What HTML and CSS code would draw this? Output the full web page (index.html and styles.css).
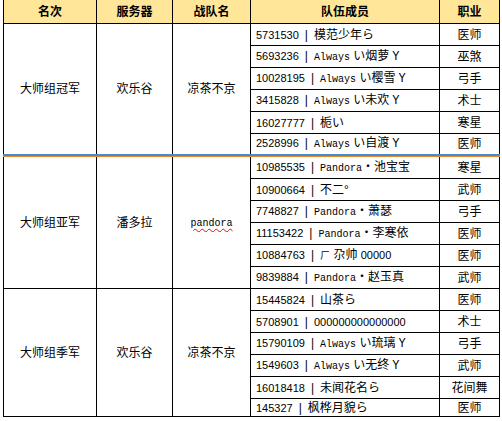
FILE: index.html
```html
<!DOCTYPE html>
<html lang="zh-CN">
<head>
<meta charset="utf-8">
<title>大师组排名</title>
<link rel="stylesheet" href="styles.css">
</head>
<body>
<table class="rank">
  <colgroup>
    <col class="c1"><col class="c2"><col class="c3"><col class="c4"><col class="c5">
  </colgroup>
  <thead>
    <tr><th>名次</th><th>服务器</th><th>战队名</th><th>队伍成员</th><th>职业</th></tr>
  </thead>
  <tbody>
    <tr>
      <td rowspan="6">大师组冠军</td><td rowspan="6">欢乐谷</td><td rowspan="6">凉茶不京</td>
      <td class="mem"><span class="num">5731530</span><span class="bar">|</span>模范少年ら</td><td>医师</td>
    </tr>
    <tr><td class="mem"><span class="num">5693236</span><span class="bar">|</span><span class="lat">Always</span> い烟萝<span class="lat tail">Y</span></td><td>巫煞</td></tr>
    <tr><td class="mem"><span class="num">10028195</span><span class="bar">|</span><span class="lat">Always</span> い樱雪<span class="lat tail">Y</span></td><td>弓手</td></tr>
    <tr><td class="mem"><span class="num">3415828</span><span class="bar">|</span><span class="lat">Always</span> い未欢<span class="lat tail">Y</span></td><td>术士</td></tr>
    <tr><td class="mem"><span class="num">16027777</span><span class="bar">|</span>栀い</td><td>寒星</td></tr>
    <tr class="short"><td class="mem"><span class="num">2528996</span><span class="bar">|</span><span class="lat">Always</span> い自渡<span class="lat tail">Y</span></td><td>医师</td></tr>
    <tr class="sep"><td colspan="5"></td></tr>
    <tr>
      <td rowspan="6">大师组亚军</td><td rowspan="6">潘多拉</td><td rowspan="6"><span class="lat spell">pandora</span></td>
      <td class="mem"><span class="num">10985535</span><span class="bar">|</span><span class="lat">Pandora</span>・池宝宝</td><td>寒星</td>
    </tr>
    <tr><td class="mem"><span class="num">10900664</span><span class="bar">|</span>不二°</td><td>武师</td></tr>
    <tr><td class="mem"><span class="num">7748827</span><span class="bar">|</span><span class="lat">Pandora</span>・萧瑟</td><td>弓手</td></tr>
    <tr><td class="mem"><span class="num">11153422</span><span class="bar">|</span><span class="lat">Pandora</span>・李寒依</td><td>医师</td></tr>
    <tr><td class="mem"><span class="num">10884763</span><span class="bar">|</span><span class="hook">ㄏ</span> 尕帅 <span class="num">00000</span></td><td>医师</td></tr>
    <tr><td class="mem"><span class="num">9839884</span><span class="bar">|</span><span class="lat">Pandora</span>・赵玉真</td><td>武师</td></tr>
    <tr>
      <td rowspan="6">大师组季军</td><td rowspan="6">欢乐谷</td><td rowspan="6">凉茶不京</td>
      <td class="mem"><span class="num">15445824</span><span class="bar">|</span>山茶ら</td><td>医师</td>
    </tr>
    <tr><td class="mem"><span class="num">5708901</span><span class="bar">|</span><span class="num">000000000000000</span></td><td>术士</td></tr>
    <tr><td class="mem"><span class="num">15790109</span><span class="bar">|</span><span class="lat">Always</span> い琉璃<span class="lat tail">Y</span></td><td>弓手</td></tr>
    <tr><td class="mem"><span class="num">1549603</span><span class="bar">|</span><span class="lat">Always</span> い无终<span class="lat tail">Y</span></td><td>武师</td></tr>
    <tr><td class="mem"><span class="num">16018418</span><span class="bar">|</span>未闻花名ら</td><td>花间舞</td></tr>
    <tr class="last"><td class="mem"><span class="num">145327</span><span class="bar">|</span>枫桦月貌ら</td><td>医师</td></tr>
  </tbody>
</table>
</body>
</html>
```
FILE: styles.css
```css
body {
  margin: 0;
  background: #fff;
  color: #000;
  font-family: "Liberation Sans", "Noto Sans CJK SC", sans-serif;
  font-size: 12px;
}
.rank {
  border-collapse: collapse;
  table-layout: fixed;
  width: 496px;
  margin-left: 3px;
}
.c1 { width: 93px; }
.c2 { width: 76px; }
.c3 { width: 78px; }
.c4 { width: 189px; }
.c5 { width: 60px; }
.rank th,
.rank td {
  border: 1px solid #000;
  padding: 0;
  text-align: center;
  line-height: 14px;
  white-space: nowrap;
  overflow: hidden;
}
.rank th {
  background: #ffe699;
  height: 23px;
  font-weight: bold;
  border-top: none;
}
.rank td { height: 21px; }
.rank .short td { height: 20px; }
.rank .last td { height: 17px; }
.rank .mem {
  text-align: left;
  padding-left: 5px;
}
.rank .sep td {
  height: 0;
  padding: 0;
  border-left: none;
  border-right: none;
  border-top: 2px solid #4a8ad0;
  border-bottom: 1px solid #e5892c;
}
.num { font-size: 11px; }
.lat {
  font-family: "Liberation Mono", monospace;
  font-size: 10px;
}
.tail {
  margin-left: 3px;
  font-size: 12px;
}
.hook { font-size: 10px; }
.bar { margin: 0 6px; }
.spell {
  text-decoration: underline wavy #e01010;
  text-underline-offset: 2px;
}
```
